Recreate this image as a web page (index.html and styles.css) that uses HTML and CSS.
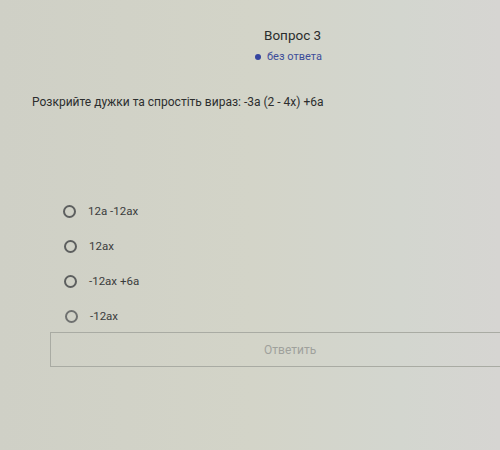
FILE: index.html
```
<!DOCTYPE html>
<html>
<head>
<meta charset="utf-8">
<link rel="stylesheet" href="styles.css">
</head>
<body>
<div class="page">
  <div class="header">
    <div class="title">Вопрос 3</div>
    <div class="status"><span class="dot"></span>без ответа</div>
  </div>
  <div class="question">Розкрийте дужки та спростіть вираз: -3a (2 - 4x) +6a</div>
  <div class="options">
    <div class="option"><span class="radio"></span><span>12a -12ax</span></div>
    <div class="option"><span class="radio"></span><span>12ax</span></div>
    <div class="option"><span class="radio"></span><span>-12ax +6a</span></div>
    <div class="option"><span class="radio"></span><span>-12ax</span></div>
  </div>
  <div class="answer"><span>Ответить</span></div>
</div>
</body>
</html>
```
FILE: styles.css
```
html, body {
  margin: 0;
  padding: 0;
}
body {
  width: 500px;
  height: 450px;
  overflow: hidden;
  background: linear-gradient(90deg, #cfd0c6 0%, #d3d4c8 50%, #d3d6cf 80%, #d6d5d2 100%);
  font-family: Roboto, "Liberation Sans", sans-serif;
  color: #2a2c2c;
}
.page {
  padding-top: 27px;
}
.header {
  display: flex;
  flex-direction: column;
  align-items: flex-start;
  padding-left: 264px;
}
.title {
  font-size: 13.5px;
  line-height: 16px;
  color: #2b2d2d;
}
.status {
  margin-top: 7px;
  margin-left: -9px;
  display: flex;
  align-items: center;
  font-size: 11px;
  line-height: 14px;
  color: #3d4d9a;
}
.dot {
  width: 6px;
  height: 6px;
  border-radius: 50%;
  background: #3545a0;
  margin-right: 6px;
}
.question {
  margin-top: 30px;
  padding-left: 32px;
  font-size: 12px;
  line-height: 16px;
  color: #2c2e2e;
}
.options {
  margin-top: 93px;
  padding-left: 63px;
  display: flex;
  flex-direction: column;
  gap: 19px;
}
.option {
  display: flex;
  align-items: center;
  height: 16px;
  font-size: 11.5px;
  color: #3a3c3c;
}
.radio {
  width: 9px;
  height: 9px;
  border: 2px solid #5d5f5f;
  border-radius: 50%;
  margin-right: 12px;
  flex: none;
}
.options .option:nth-child(2) .radio,
.options .option:nth-child(3) .radio {
  margin-left: 1px;
}
.options .option:nth-child(4) .radio {
  margin-left: 2px;
  border-color: #6f7170;
}
.answer {
  margin-top: 8px;
  margin-left: 50px;
  width: 470px;
  height: 35px;
  border: 1px solid #a9aba3;
  display: flex;
  align-items: center;
  padding-left: 213px;
  box-sizing: border-box;
  font-size: 12px;
  color: #9fa19c;
}
```
